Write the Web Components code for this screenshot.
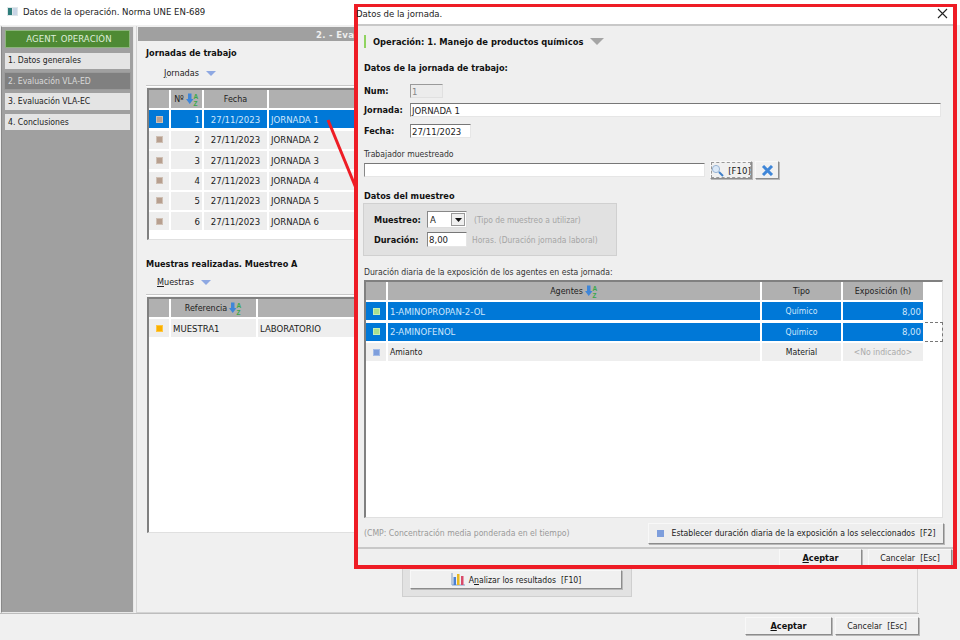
<!DOCTYPE html>
<html lang="es"><head><meta charset="utf-8"><title>Datos de la operación</title>
<style>
html,body{margin:0;padding:0;background:#fff}
body{width:960px;height:640px;overflow:hidden;font-family:"DejaVu Sans Condensed","DejaVu Sans",sans-serif;font-stretch:condensed;font-size:8.6px;color:#1a1a1a}
</style></head><body>
<template id="sort-tpl"><svg width="13" height="13" viewBox="0 0 13 13" style="vertical-align:-3px;flex:none"><path d="M2 .5h3.500v5.500h2L3.750 11 0 6h2z" fill="#3f86d8"/><text x="7.500" y="6" font-size="6.500" font-weight="700" fill="#39a84a" font-family="Liberation Sans">A</text><text x="7.500" y="12.500" font-size="6.500" font-weight="700" fill="#39a84a" font-family="Liberation Sans">Z</text></svg></template>

<op-app></op-app>

<script>
const sortSvg=()=>document.getElementById('sort-tpl').innerHTML;
const FF=`"DejaVu Sans Condensed","DejaVu Sans",sans-serif`;
const base=`:host{font-family:${FF};font-stretch:condensed;font-size:8.6px;color:#1a1a1a;box-sizing:border-box}*{box-sizing:border-box}u{text-underline-offset:1px}`;
class El extends HTMLElement{
  constructor(){super();this.attachShadow({mode:'open'});}
  connectedCallback(){if(!this.shadowRoot.innerHTML)this.shadowRoot.innerHTML=`<style>${base}${this.css()}</style>${this.html()}`;}
  css(){return ''} html(){return '<slot></slot>'}
}
class WinBtn extends El{
  css(){return `:host{display:flex;align-items:center;justify-content:center;gap:4px;background:#f0f0f0;border:1px solid;border-color:#f8f8f8 #8c8c8c #8c8c8c #f8f8f8;box-shadow:1px 1px 0 #b8b8b8;white-space:nowrap}`}
}
class WinInput extends El{
  css(){return `:host{display:flex;align-items:center;height:14px;padding:0 0 0 1px;background:#fff;border-top:1px solid #777;border-left:1px solid #888;border-right:1px solid #e6e6e6;border-bottom:1px solid #e6e6e6;color:#222;font-size:9.5px}:host([disabled]){background:#ececec;color:#888;border-color:#9a9a9a #e0e0e0 #e0e0e0 #9a9a9a}`}
}
class DataGrid extends El{
  css(){return `:host{display:block;background:#fff;border-top:2px solid #808080;border-left:2px solid #808080;border-bottom:1px solid #e0e0e0;border-right:1px solid #e0e0e0}
  .r{display:grid;gap:2px;margin-bottom:2.4px;height:18px}
  .c{background:#eeeeee;display:flex;align-items:center;padding:0 2px;white-space:nowrap;overflow:hidden;font-size:9.5px}
  .c.s{font-size:8.6px}
  .h .c{background:#b0b0b0;justify-content:center;gap:2px;color:#222;font-size:8.9px}
  .r.sel .c{background:#0078d7;color:#cfe6fb}
  .m{width:7px;height:7px;margin:auto;display:block}
  .rt{justify-content:flex-end}.ct{justify-content:center}`}
  html(){return `<div id="o"></div>`}
  connectedCallback(){super.connectedCallback();
    const d=JSON.parse(this.getAttribute('data'));const cols=d.cols;
    const o=this.shadowRoot.getElementById('o');
    const tpl=`grid-template-columns:${cols}`;
    let s=`<div class="r h" style="${tpl}">`+d.head.map(h=>`<div class="c">${h.replace('^',sortSvg())}</div>`).join('')+`</div>`;
    for(const r of d.rows){
      s+=`<div class="r ${r.sel?'sel':''}" style="${tpl}"><div class="c" style="padding:0"><span class="m" style="background:${r.col};box-shadow:inset 0 0 0 1px ${r.bd}"></span></div>`+
      r.c.map((t,i)=>`<div class="c ${(d.align||[])[i]||''} ${/[a-z]/.test(t)?'s':''}">${t}</div>`).join('')+`</div>`;
    }
    o.innerHTML=s;
  }
}
class NavItem extends El{
  css(){return `:host{display:flex;align-items:center;height:16.300px;padding:0 0 1px 3px;background:#e4e4e4;color:#222;margin-bottom:4.100px}
  :host([active]){background:#808080;color:#d9d9d9;outline:1px solid #9a9a9a}
  :host([head]){background:#4e8a34;color:#dfeeda;justify-content:center;height:18px;margin-bottom:4.700px;border:1px solid #8db47d;letter-spacing:.1px;font-size:9.5px}`}
}
class SideNav extends El{
  css(){return `:host{display:block;width:133px;margin-left:1px;background:#a0a0a0;border:1px solid #e8e8e8;border-left:1px solid #888;padding:3px 3px 3px 3px}`}
  html(){return `<nav-item head>AGENT. OPERACIÓN</nav-item><nav-item>1. Datos generales</nav-item><nav-item active>2. Evaluación VLA-ED</nav-item><nav-item>3. Evaluación VLA-EC</nav-item><nav-item>4. Conclusiones</nav-item>`}
}
const TRI=`<svg width="10" height="5" viewBox="0 0 10 5"><path d="M0 0h10L5 5z" fill="#8ea8e2"/></svg>`;
const BOLD=`font-family:${FF};font-stretch:condensed;font-weight:700;font-size:9.100px;color:#111;white-space:nowrap;`;
class OpPanel extends El{
  css(){return `:host{display:block;width:782px;position:relative;background:#f0f0f0;border:1px solid #d4d4d4;border-top:0;padding-top:1px}
  .bar{height:14px;background:#a0a0a0;color:#eee;font-weight:700;font-size:9.5px;display:flex;align-items:center;margin-left:1px;padding-left:178px;letter-spacing:.3px}
  .t{${BOLD}margin:0 0 0 9px}
  .m{display:flex;align-items:center;gap:7px;color:#222;font-size:9px}
  .ln{border-top:1px solid #c8c8c8;border-bottom:1px solid #fff;margin:0 0 0 9px}
  data-grid{margin-left:10px;width:400px}
  .an{position:absolute;left:265px;top:525px;width:230px;height:46px;background:#e2e2e2;border:1px solid #cfcfcf;padding:8px 7px 0 7px}
  .an win-btn{height:19px;width:212px;margin-top:10px}
  `}
  html(){
   const r1=[1,2,3,4,5,6].map((n,i)=>({sel:i==0,col:'#b79f8f',bd:'#cfc0b4',c:[String(n),'27/11/2023','JORNADA '+n]}));
   const d1={cols:'20px 31px 63px 320px',head:['','Nº ^','Fecha',''],align:['rt','ct',''],rows:r1};
   const d2={cols:'20px 85px 320px',head:['','Referencia ^',''],rows:[{col:'#f9b000',bd:'#ffc640',c:['MUESTRA1','LABORATORIO']}]};
   return `<div class="bar">2. - Eva</div>
   <div class="t" style="margin-top:6px;height:13px;line-height:13px">Jornadas de trabajo</div>
   <div class="m" style="margin:7px 0 0 27px;height:12px"><span><u>J</u>ornadas</span>${TRI}</div>
   <div class="ln" style="margin-top:6px"></div>
   <data-grid style="height:152px;margin-top:1px" data='${JSON.stringify(d1)}'></data-grid>
   <div class="t" style="margin-top:18px;height:13px;line-height:13px">Muestras realizadas.&nbsp;Muestreo A</div>
   <div class="m" style="margin:5px 0 0 20px;height:12px"><span><u>M</u>uestras</span>${TRI}</div>
   <div class="ln" style="margin-top:6px"></div>
   <data-grid style="height:236px;margin-top:1px" data='${JSON.stringify(d2)}'></data-grid>
   <div class="an"><win-btn><svg width="14" height="13" viewBox="0 0 14 13"><path d="M1 0v12h13" fill="none" stroke="#7f9fc8"/><rect x="2.500" y="4" width="2.500" height="8" fill="#4a7fd0"/><rect x="6" y="1" width="2.500" height="11" fill="#e8b820"/><rect x="10" y="3" width="2.500" height="9" fill="#d84a6a"/></svg><span>A<u>n</u>alizar los resultados&nbsp; [F10]</span></win-btn></div>`;
  }
}
class FootBtns extends El{
  css(){return `:host{display:flex;justify-content:flex-end;gap:var(--g,3px);font-size:8.8px}
  win-btn{height:18px;font-size:8.8px}
  .a{${BOLD}}`}
  html(){const a=this.getAttribute('aw'),c=this.getAttribute('cw');
   return `<win-btn style="width:${a}px"><span class="a"><u>A</u>ceptar</span></win-btn><win-btn style="width:${c}px"><span>Cancelar&nbsp; [Esc]</span></win-btn>`}
}
class JornadaDialog extends El{
  css(){return `:host{position:absolute;left:354px;top:4px;width:603px;height:565px;border:4px solid #ee1c25;background:#efefef;display:flex;flex-direction:column}
  .tt{height:17px;margin-top:-1px;background:#fff;display:flex;align-items:center;justify-content:space-between;padding:0 5px 5px 0;color:#222;flex:none;font-size:9.5px}
  .tt span{margin-left:-2px}
  .tt svg{display:block}
  .sep{height:2px;background:#c8c8c8;flex:none}
  .body{flex:1;padding:0 9px 0 6px;position:relative}
  .b{${BOLD}}
  .op{display:flex;align-items:center;margin:9px 0 0 0;height:13px}
  .op i{width:2px;height:13px;background:#8fd35f;margin-right:7px}
  .op .b{font-size:9.3px}
  .op svg{margin-left:7px}
  .row{display:flex;align-items:center;height:14px}
  .row .b{width:46px}
  .tool{display:flex;align-items:center;gap:3px}
  .tool win-btn{font-size:9.5px}
  .box{width:254px;height:53px;margin:0 0 0 -1px;background:#e1e1e1;border:1px solid #d0d0d0;padding:7px 0 0 10px}
  .l2{display:flex;align-items:center;height:17px}
  .l2 .b{width:53px}
  .hint{color:#a5a5a5;margin-left:7px;white-space:nowrap;font-size:8.4px}
  .sel{width:40px;height:17px;background:#fff;border:1px solid #888;border-right-color:#ddd;border-bottom-color:#ddd;display:flex;align-items:center;padding-left:2px;justify-content:space-between;font-size:9.5px}
  .sel b{display:flex;width:14px;height:13px;margin-right:1px;background:#efefef;border:1px solid #999;align-items:center;justify-content:center}
  data-grid{width:579px;height:238px;margin-top:2px}
  .focus{position:absolute;left:567px;top:296px;width:18px;height:20px;border:1px dashed #777;border-left:0}
  .bot{display:flex;align-items:center;justify-content:space-between;height:22px;margin-top:4px}
  .foot{flex:none;display:flex;justify-content:flex-end;padding-right:1px;border-top:2px solid #c8c8c8;height:18px;overflow:hidden}
  `}
  html(){
   const d={cols:'20px 372px 79px 80px',head:['','Agentes ^','Tipo','Exposición (h)'],align:['','ct','rt'],rows:[
     {sel:1,col:'#a8e08f',bd:'#c5eeb5',c:['1-AMINOPROPAN-2-OL','Químico','8,00']},
     {sel:1,col:'#a8e08f',bd:'#c5eeb5',c:['2-AMINOFENOL','Químico','8,00']},
     {col:'#7e9edc',bd:'#a3bce8',c:['Amianto','Material','<span style="color:#aaa;margin:auto">&lt;No indicado&gt;</span>']}]};
   return `<div class="tt"><span>Datos de la jornada.</span><svg width="11" height="11" viewBox="0 0 11 11"><path d="M1 1l9 9M10 1l-9 9" stroke="#222" stroke-width="1.100"/></svg></div><div class="sep"></div>
   <div class="body">
     <div class="op"><i></i><span class="b">Operación: 1. Manejo de productos químicos</span><svg width="14" height="7" viewBox="0 0 14 7"><path d="M0 0h14L7 7z" fill="#a5a5a5"/></svg></div>
     <div class="b" style="margin-top:14px;height:13px;line-height:13px">Datos de la jornada de trabajo:</div>
     <div class="row" style="margin-top:9px"><span class="b">Num:</span><win-input disabled style="width:33px">1</win-input></div>
     <div class="row" style="margin-top:5px"><span class="b">Jornada:</span><win-input style="width:531px">JORNADA 1</win-input></div>
     <div class="row" style="margin-top:7px"><span class="b">Fecha:</span><win-input style="width:61px">27/11/2023</win-input></div>
     <div style="margin-top:10px;height:12px;line-height:12px;color:#333">Trabajador muestreado</div>
     <div class="tool" style="margin-top:1px"><win-input style="width:341px;height:14px;margin-right:2px"></win-input>
       <win-btn style="width:42px;height:18px;outline:1px dashed #999;outline-offset:-2px"><svg width="13" height="13" viewBox="0 0 13 13"><circle cx="5" cy="5" r="3.600" fill="#dbe9f8" stroke="#9ab4d2"/><path d="M8 8l4 4" stroke="#3f7fc8" stroke-width="2"/></svg><span>[F10]</span></win-btn>
       <win-btn style="width:24px;height:18px"><svg width="13" height="11" viewBox="0 0 13 11"><path d="M2 1l9 9M11 1l-9 9" fill="none" stroke="#3f86d8" stroke-width="3"/></svg></win-btn></div>
     <div class="b" style="margin-top:11px;height:13px;line-height:13px">Datos del muestreo</div>
     <div class="box">
       <div class="l2"><span class="b">Muestreo:</span><span class="sel">A<b><svg width="7" height="4" viewBox="0 0 7 4"><path d="M0 0h7L3.500 4z" fill="#111"/></svg></b></span><span class="hint">(Tipo de muestreo a utilizar)</span></div>
       <div class="l2" style="margin-top:3px"><span class="b">Duración:</span><win-input style="width:40px;height:15px">8,00</win-input><span class="hint" style="margin-left:5px">Horas. (Duración jornada laboral)</span></div>
     </div>
     <div style="margin-top:10px;height:12px;line-height:12px;color:#333">Duración diaria de la exposición de los agentes en esta jornada:</div>
     <data-grid data='${JSON.stringify(d).replace(/&/g,"&amp;")}'></data-grid>
     <div class="focus"></div>
     <div class="bot"><span style="color:#999">(CMP: Concentración media ponderada en el tiempo)</span>
       <win-btn style="width:296px;height:21px;background:#eee"><svg width="7" height="7" style="margin-right:4px"><rect width="7" height="7" fill="#7e9edc"/></svg><span>Establecer duración diaria de la exposición a los seleccionados&nbsp; [F2]</span></win-btn></div>
   </div>
   <div class="foot"><foot-btns aw="83" cw="84" style="--g:6px"></foot-btns></div>`;
  }
}
class OpApp extends El{
  css(){return `:host{display:block;position:relative;width:960px;height:640px;background:#f0f0f0;overflow:hidden}
  .title{height:25px;background:#fff;display:flex;align-items:center;padding:0 0 3px 7px;gap:5px;color:#222;font-size:9.5px}
  .main{display:flex;height:588px;gap:2px;padding-top:1px}
  .foot{border-top:1px solid #bdbdbd;width:919px;padding-top:3px;height:26px}
  .arrow{position:absolute;left:0;top:0;pointer-events:none}`}
  html(){return `<div class="title"><svg width="11" height="9" viewBox="0 0 11 9"><rect width="11" height="9" fill="#dfe7ea"/><rect x="1" y="1" width="4" height="7" fill="#2e7d7a"/><rect x="6" y="1" width="4" height="7" fill="#c9d5e6"/></svg><span>Datos de la operación. Norma UNE EN-689</span></div>
  <div class="main"><side-nav></side-nav><op-panel></op-panel></div>
  <div class="foot"><foot-btns aw="87" cw="84"></foot-btns></div>
  <svg class="arrow" width="400" height="200"><path d="M328 120L358 193" stroke="#ee1c25" stroke-width="3" fill="none"/></svg>
  <jornada-dialog></jornada-dialog>`}
}
customElements.define('win-btn',WinBtn);
customElements.define('win-input',WinInput);
customElements.define('data-grid',DataGrid);
customElements.define('nav-item',NavItem);
customElements.define('side-nav',SideNav);
customElements.define('op-panel',OpPanel);
customElements.define('foot-btns',FootBtns);
customElements.define('jornada-dialog',JornadaDialog);
customElements.define('op-app',OpApp);
</script>
</body></html>
